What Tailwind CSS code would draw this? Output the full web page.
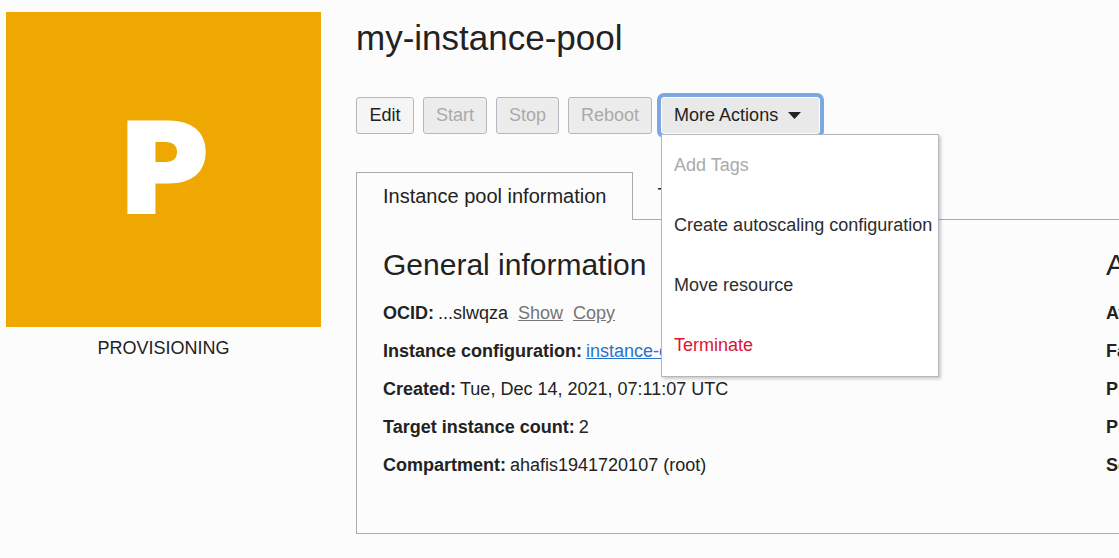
<!DOCTYPE html>
<html lang="en">
<head>
<meta charset="utf-8">
<meta name="viewport" content="width=device-width, initial-scale=1">
<title>my-instance-pool</title>
<script src="https://cdn.jsdelivr.net/npm/@tailwindcss/browser@4"></script>
</head>
<body class="min-h-screen overflow-x-hidden bg-[#fcfcfc] font-['Liberation_Sans',Arial,sans-serif] text-[18px] leading-6 text-[#222]">
<div class="flex gap-[35px] pt-3 pl-[6px]">
  <aside class="w-[315px] shrink-0">
    <div class="flex aspect-square items-center justify-center bg-[#efa702] font-['DejaVu_Sans',sans-serif] text-[122px] leading-none font-bold text-white [-webkit-text-stroke:5px_white]">P</div>
    <p class="mt-[9px] text-center">PROVISIONING</p>
  </aside>

  <main class="min-w-0 flex-1">
    <h1 class="pt-1 text-[35px] leading-[44px]">my-instance-pool</h1>

    <div class="mt-[37px] flex gap-[9px]">
      <button type="button" class="h-[37px] min-w-[58px] rounded-[3px] border border-[#b4b8be] bg-[#f5f5f5] px-3 pb-0.5">Edit</button>
      <button type="button" disabled class="h-[37px] min-w-[58px] rounded-[3px] border border-[#b4b8be] bg-[#ececec] px-3 pb-0.5 text-[#aaa]">Start</button>
      <button type="button" disabled class="h-[37px] min-w-[58px] rounded-[3px] border border-[#b4b8be] bg-[#ececec] px-3 pb-0.5 text-[#aaa]">Stop</button>
      <button type="button" disabled class="h-[37px] min-w-[58px] rounded-[3px] border border-[#b4b8be] bg-[#ececec] px-3 pb-0.5 text-[#aaa]">Reboot</button>
      <div class="relative">
        <button type="button" aria-haspopup="menu" aria-expanded="true" class="flex h-[37px] items-center gap-[10px] rounded-[3px] border border-white bg-[#e9e9e9] pr-[18px] pb-0.5 pl-3 ring-4 ring-[#7da7e3]">
          More Actions
          <svg class="mt-0.5 h-[7px] w-[13px]" viewBox="0 0 13 7" fill="#222" aria-hidden="true"><path d="M0 0h13L6.500 7z"/></svg>
        </button>
        <div role="menu" class="absolute top-full left-0 z-10 flex flex-col border border-[#b4b8be] bg-white pb-px whitespace-nowrap text-[#2d2d2d] shadow-[2px_2px_3px_rgba(0,0,0,0.2)]">
          <button type="button" role="menuitem" disabled class="h-[60px] pr-[6px] pl-3 text-left text-[#aaa]">Add Tags</button>
          <button type="button" role="menuitem" class="h-[60px] pr-[6px] pl-3 text-left">Create autoscaling configuration</button>
          <button type="button" role="menuitem" class="h-[60px] pr-[6px] pl-3 text-left">Move resource</button>
          <button type="button" role="menuitem" class="h-[60px] pr-[6px] pl-3 text-left text-[#dc1432]">Terminate</button>
        </div>
      </div>
    </div>

    <div role="tablist" class="mt-[38px] flex h-[47px] text-[20px]">
      <button type="button" role="tab" aria-selected="true" class="z-1 h-12 border border-b-0 border-[#aaa] bg-[#fcfcfc] px-[26px] pb-0.5">Instance pool information</button>
      <button type="button" role="tab" aria-selected="false" class="h-[45px] px-6">Tags</button>
    </div>

    <div class="flex border-y border-l border-[#aaa] pt-[26px] pb-14 pl-[26px] whitespace-nowrap">
      <section class="w-[723px] shrink-0">
        <h2 class="text-[30px] leading-[38px]">General information</h2>
        <dl class="mt-[17px] flex flex-col gap-[14px]">
          <div class="flex gap-1"><dt class="font-bold">OCID:</dt><dd class="flex gap-[10px]">...slwqza <a href="#" class="text-[#757575] underline">Show</a> <a href="#" class="text-[#757575] underline">Copy</a></dd></div>
          <div class="flex gap-1"><dt class="font-bold">Instance configuration:</dt><dd><a href="#" class="text-[#2672cf] underline">instance-c</a></dd></div>
          <div class="flex gap-1"><dt class="font-bold">Created:</dt><dd>Tue, Dec 14, 2021, 07:11:07 UTC</dd></div>
          <div class="flex gap-1"><dt class="font-bold">Target instance count:</dt><dd>2</dd></div>
          <div class="flex gap-1"><dt class="font-bold">Compartment:</dt><dd>ahafis1941720107 (root)</dd></div>
        </dl>
      </section>
      <section class="min-w-0 flex-1 overflow-hidden">
        <h2 class="text-[30px] leading-[38px]">A</h2>
        <ul class="mt-[17px] flex flex-col gap-[14px] font-bold">
          <li>Av</li>
          <li>Fa</li>
          <li>Pr</li>
          <li>Pr</li>
          <li>Sc</li>
        </ul>
      </section>
    </div>
  </main>
</div>
</body>
</html>
